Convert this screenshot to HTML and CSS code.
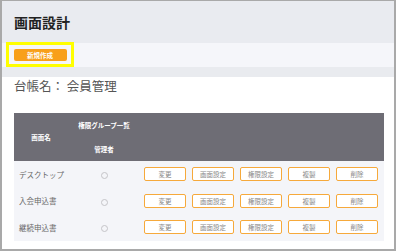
FILE: index.html
```html
<!DOCTYPE html>
<html>
<head>
<meta charset="utf-8">
<title>画面設計</title>
<link rel="stylesheet" href="styles.css">
</head>
<body>
<div class="frame">
  <div class="hd">
    <h1 class="hd__title">画面設計</h1>
  </div>
  <div class="toolbar">
    <span class="toolbar__mark"><a class="btn-new">新規作成</a></span>
  </div>
  <div class="sep"></div>
  <div class="main">
    <p class="ledger">台帳名： 会員管理</p>
    <table class="grid">
      <thead>
        <tr>
          <th class="grid__name" rowspan="2">画面名</th>
          <th class="grid__perm">権限グループ一覧</th>
          <th class="grid__ops" rowspan="2"></th>
        </tr>
        <tr>
          <th class="grid__perm">管理者</th>
        </tr>
      </thead>
      <tbody>
        <tr>
          <td class="grid__label">デスクトップ</td>
          <td class="grid__radio"><span class="radio"></span></td>
          <td class="grid__ops">
            <div class="ops">
              <a class="btn">変更</a><a class="btn">画面設定</a><a class="btn">権限設定</a><a class="btn">複製</a><a class="btn">削除</a>
            </div>
          </td>
        </tr>
        <tr>
          <td class="grid__label">入会申込書</td>
          <td class="grid__radio"><span class="radio"></span></td>
          <td class="grid__ops">
            <div class="ops">
              <a class="btn">変更</a><a class="btn">画面設定</a><a class="btn">権限設定</a><a class="btn">複製</a><a class="btn">削除</a>
            </div>
          </td>
        </tr>
        <tr>
          <td class="grid__label">継続申込書</td>
          <td class="grid__radio"><span class="radio"></span></td>
          <td class="grid__ops">
            <div class="ops">
              <a class="btn">変更</a><a class="btn">画面設定</a><a class="btn">権限設定</a><a class="btn">複製</a><a class="btn">削除</a>
            </div>
          </td>
        </tr>
      </tbody>
    </table>
  </div>
</div>
</body>
</html>
```

FILE: styles.css
```css
/* reset */
html,body,div,p,h1,table,th,td{margin:0;padding:0}
body{font-family:"Noto Sans CJK JP","Noto Sans",sans-serif;background:#fff;}

/* frame */
.frame{
  box-sizing:border-box;
  width:396px;
  height:251px;
  border:2px solid #a9a9a9;
  border-top-width:1px;
  display:flex;
  flex-direction:column;
  overflow:hidden;
}

/* header */
.hd{height:42px;background:#e9ebf0;display:flex;align-items:center;padding-left:12px;}
.hd__title{font-size:14px;font-weight:700;color:#222;line-height:1;}

.toolbar{height:24px;background:#f5f6fa;display:flex;align-items:center;padding-left:4px;}
.toolbar__mark{display:flex;box-sizing:border-box;height:25px;width:68px;border:3px solid #ffff00;align-items:center;justify-content:center;margin-top:-1px;}
.btn-new{display:flex;align-items:center;justify-content:center;width:53px;height:12px;background:#f8a01a;border-radius:2px;color:#fff;font-size:6.5px;font-weight:700;}

.sep{height:10px;background:#e9ebef;}

/* main */
.main{flex:1;padding:0 10px 0 12px;}
.ledger{font-size:12.5px;color:#555;line-height:14px;padding-top:2px;height:34px;}

.grid{border-collapse:collapse;width:370px;}
.grid th{background:#6e6d75;color:#fff;font-size:6.5px;font-weight:700;height:24px;}
.grid__name{width:54px;}
.grid__perm{width:72px;}
.grid tbody td{background:#f4f5f9;height:26.6px;font-size:7.5px;color:#666;}
.grid__label{padding-left:5px !important;}
.grid__radio{text-align:center;}
.radio{display:inline-block;box-sizing:border-box;width:7px;height:7px;border:1px solid #c4c4c8;border-radius:50%;vertical-align:middle;}

.ops{display:flex;gap:6px;padding-left:4px;}
.btn{display:flex;align-items:center;justify-content:center;box-sizing:border-box;width:42px;height:14px;border:1.5px solid #f6a93b;border-radius:2px;background:#fff;color:#888;font-size:6.5px;}
```
